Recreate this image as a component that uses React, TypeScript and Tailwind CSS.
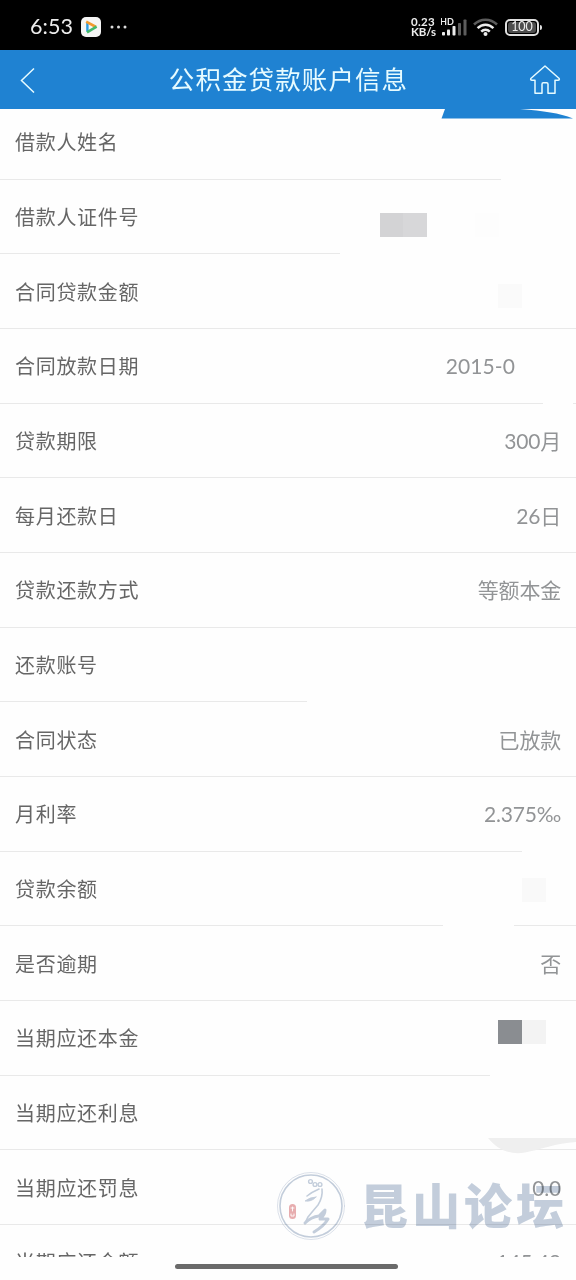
import type { ReactNode } from "react";

type Block = { left: number; top: number; width: number; color: string };

type Item = {
  label: string;
  value?: string;
  // the value is partly wiped out at its right side
  wiped?: boolean;
  // length of the divider from the left edge, full width when omitted
  line?: number;
  // length of the piece of divider at the right edge
  lineEnd?: number;
  blocks?: Block[];
};

const items: Item[] = [
  { label: "借款人姓名", line: 501, blocks: [{ left: 499, top: 19, width: 24, color: "#fefefe" }] },
  {
    label: "借款人证件号",
    line: 340,
    blocks: [
      { left: 380, top: 33, width: 24, color: "#d3d3d5" },
      { left: 403, top: 33, width: 24, color: "#d7d7d9" },
      { left: 475, top: 33, width: 24, color: "#fdfdfd" },
    ],
  },
  { label: "合同贷款金额", blocks: [{ left: 498, top: 30, width: 24, color: "#fafafa" }] },
  { label: "合同放款日期", value: "2015-0", wiped: true, line: 543, lineEnd: 3 },
  { label: "贷款期限", value: "300月" },
  { label: "每月还款日", value: "26日" },
  { label: "贷款还款方式", value: "等额本金" },
  { label: "还款账号", line: 307 },
  { label: "合同状态", value: "已放款" },
  { label: "月利率", value: "2.375‰", line: 522 },
  { label: "贷款余额", line: 443, lineEnd: 62, blocks: [{ left: 522, top: 26, width: 24, color: "#f9f9f9" }] },
  { label: "是否逾期", value: "否" },
  {
    label: "当期应还本金",
    line: 490,
    blocks: [
      { left: 498, top: 19, width: 24, color: "#8a8d91" },
      { left: 522, top: 19, width: 24, color: "#f3f3f3" },
    ],
  },
  { label: "当期应还利息" },
  { label: "当期应还罚息", value: "0.0" },
  { label: "当期应还金额", value: "145.49" },
];

export default function App() {
  return (
    <div className="relative flex h-[1280px] w-[576px] flex-col overflow-hidden bg-[#fefefe] font-['Lato','Noto_Sans_CJK_SC',sans-serif]">
      <StatusBar />
      <Header />

      <main className="relative h-[1148px] overflow-hidden">
        <div className="-mt-1">
          {items.map((item) => (
            <Row key={item.label} item={item} />
          ))}
        </div>
        <svg className="absolute left-[440px] top-0" width="136" height="11" viewBox="0 0 136 11">
          <path d="M5 0 L1.5 9.5 H133 C119 4 104 2 80 0 Z" fill="#1f82d2" />
        </svg>
        <svg className="absolute left-[488px] top-[1029px]" width="88" height="18" viewBox="0 0 88 18">
          <path d="M0 0 H88 V4 C68 5 52 12 37 14.5 C22 17 10 12 0 0 Z" fill="#efefef" />
        </svg>
      </main>

      <Watermark />

      <div className="flex flex-1 justify-center pt-[7px] pr-1">
        <div className="h-[5px] w-[223px] rounded-full bg-[#6a6a6a]" />
      </div>
    </div>
  );
}

function StatusBar() {
  return (
    <div className="flex h-[50px] shrink-0 items-center bg-black pt-1 pr-[34px] pl-[30px] text-[#ececec]">
      <span className="w-[51px] text-[21.5px] leading-none tracking-[0.1px]">6:53</span>
      <svg width="20" height="20" viewBox="0 0 20 20" fill="none">
        <rect width="20" height="20" rx="5" fill="#f5f5f5" />
        <path d="M6.4 5.5V14.5" stroke="#2b9be0" strokeWidth="2.4" />
        <path d="M5.2 4.6L15 10" stroke="#f39a2d" strokeWidth="2.6" />
        <path d="M6 15.4L15.6 9.6" stroke="#42b96b" strokeWidth="2.6" />
      </svg>
      <svg className="ml-2" width="20" height="4" viewBox="0 0 20 4" fill="#dcdcdc">
        <circle cx="3" cy="2" r="1.5" />
        <circle cx="9.5" cy="2" r="1.5" />
        <circle cx="16" cy="2" r="1.5" />
      </svg>

      <div className="ml-auto flex items-center">
        <div className="flex w-[30px] flex-col text-[11.5px] leading-[10px] font-bold whitespace-nowrap">
          <span className="tracking-[0.3px]">0.23</span>
          <span className="tracking-[-0.1px]">KB/s</span>
        </div>
        <svg className="font-['Lato']" width="28" height="20" viewBox="0 0 28 20" fill="#ececec">
          <text x="-1" y="7.5" fontSize="9" fontWeight="700">HD</text>
          <rect x="1" y="15" width="3" height="3.5" rx="0.8" />
          <rect x="6" y="12.5" width="3" height="6" rx="0.8" />
          <rect x="11.5" y="9" width="3" height="9.5" rx="0.8" />
          <rect x="17" y="6" width="3" height="12.5" rx="0.8" fill="#5c5c5c" />
          <rect x="22.5" y="2.5" width="3" height="16" rx="0.8" fill="#5c5c5c" />
        </svg>
        <svg className="ml-1" width="25" height="19" viewBox="0 0 25 19" fill="none" strokeWidth="2.5">
          <path d="M1 6.5C7.5 0 17.5 0 24 6.5" stroke="#5c5c5c" />
          <path d="M4.6 10.2C9.2 5.6 15.8 5.6 20.4 10.2" stroke="#ececec" />
          <path d="M8.2 13.7C10.7 11.2 14.3 11.2 16.8 13.7" stroke="#ececec" />
          <circle cx="12.5" cy="16" r="2" fill="#ececec" />
        </svg>
        <div className="ml-[7px] flex h-[17px] w-[34px] items-center justify-center rounded-[5px] border-2 border-[#e0e0e0] p-px">
          <span className="flex h-full w-full items-center justify-center rounded-[3px] bg-[#4e4e4e] text-[12.5px] leading-none">
            100
          </span>
        </div>
        <div className="ml-px h-[5px] w-[2px] rounded-r bg-[#e0e0e0]" />
      </div>
    </div>
  );
}

function Header() {
  return (
    <header className="flex h-[59px] shrink-0 items-center justify-between bg-[#1f82d2] pr-[15px] pl-5 text-[#e6fbff]">
      <svg width="28" height="26" viewBox="0 0 28 26" fill="none" stroke="currentColor" strokeWidth="1.5">
        <path d="M14 1.5L1.5 13.5L14 25.5" />
      </svg>
      <h1 className="pt-px text-[25.5px] leading-none tracking-[1.1px]">公积金贷款账户信息</h1>
      <svg width="32" height="31" viewBox="0 0 32 31" fill="none" stroke="currentColor" strokeWidth="1.5" strokeLinejoin="round">
        <path d="M16 2L1.8 14.5Q1.2 16.2 3 16.2H6V29.2H13V20.2Q13 18.8 14.3 18.8H17.7Q19 18.8 19 20.2V29.2H26V16.2H29Q30.8 16.2 30.2 14.5Z" />
      </svg>
    </header>
  );
}

function Row({ item }: { item: Item }) {
  return (
    <div className="relative flex h-[74.66px] flex-col">
      <div className="flex flex-1 items-center justify-between pr-[15px] pl-[15px] leading-none">
        <Label>{item.label}</Label>
        {item.value && <Value wiped={item.wiped}>{item.value}</Value>}
      </div>
      <div className="flex h-px justify-between">
        <div className="bg-[#e9e9e9]" style={{ width: item.line ?? 576 }} />
        {item.lineEnd && <div className="bg-[#e9e9e9]" style={{ width: item.lineEnd }} />}
      </div>
      {item.blocks?.map((b) => (
        <div
          key={b.left}
          className="absolute h-6"
          style={{ left: b.left, top: b.top, width: b.width, background: b.color }}
        />
      ))}
    </div>
  );
}

function Label({ children }: { children: ReactNode }) {
  return <span className="pt-px text-[20px] tracking-[0.7px] text-[#666666]">{children}</span>;
}

function Value({ children, wiped }: { children: ReactNode; wiped?: boolean }) {
  return (
    <span className={`text-[21px] text-[#929496] ${wiped ? "mr-[46px] tracking-[0.1px]" : "tracking-[-0.2px]"}`}>
      {children}
    </span>
  );
}

function Watermark() {
  return (
    <div className="pointer-events-none absolute top-[1171px] left-[276px] flex items-center opacity-80 mix-blend-multiply">
      <svg width="70" height="70" viewBox="0 0 70 70" fill="none" stroke="#b5c2d3" strokeLinecap="round">
        <circle cx="35" cy="35" r="33.5" strokeWidth="1" opacity="0.6" />
        <circle cx="35" cy="35" r="31" strokeWidth="1.6" />
        <circle cx="34.5" cy="10.5" r="1.9" strokeWidth="1.4" />
        <circle cx="39" cy="13.5" r="1.9" strokeWidth="1.4" />
        <circle cx="44" cy="13.5" r="1.9" strokeWidth="1.4" />
        <path d="M46 18Q47 26 42 34Q36 41 32 46L29 52" strokeWidth="1.6" />
        <path d="M43 18Q36 21 31 25" strokeWidth="1.6" />
        <path d="M40 26Q36 31 29 30Q34 26 40 26Z" fill="#b5c2d3" strokeWidth="0.8" />
        <path d="M29 52Q35 46 43 45L49 39Q49 44 44 48L52 48Q48 55 38 61" strokeWidth="3" strokeLinejoin="round" />
        <rect x="13" y="33" width="7" height="15" rx="3.5" fill="#e39a9c" stroke="none" />
        <path d="M15 37H18M16.5 36V40M15 43V45H18V43" stroke="#fff" strokeWidth="0.9" />
      </svg>
      <span className="ml-[14px] text-[48px] leading-none font-black tracking-[4px] whitespace-nowrap text-[#b5c2d3]">
        昆山论坛
      </span>
    </div>
  );
}
